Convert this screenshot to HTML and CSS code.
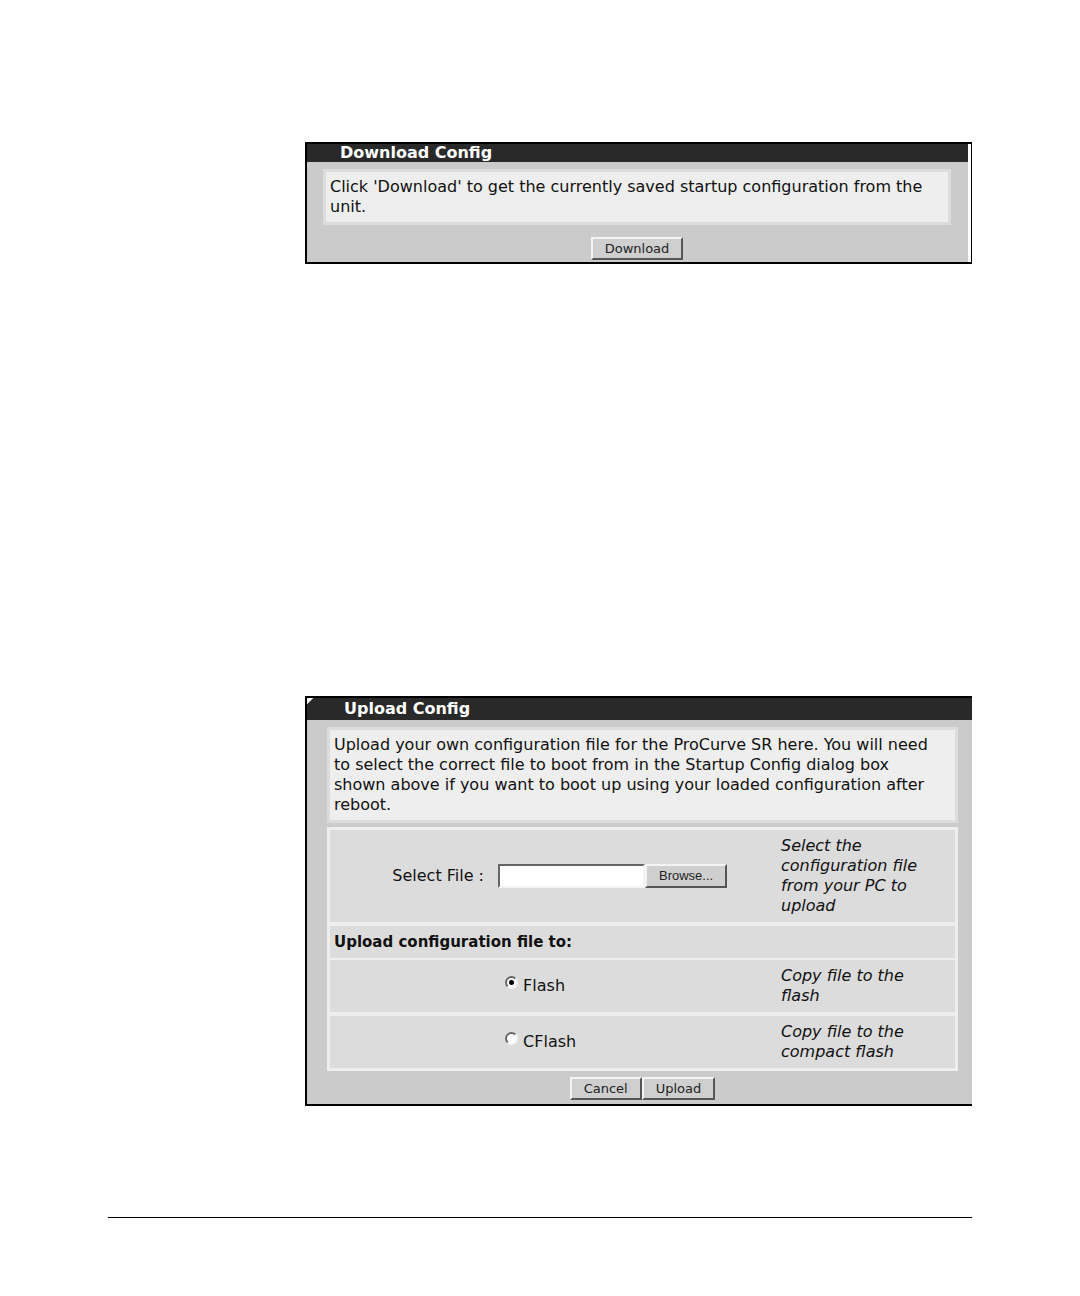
FILE: index.html
```
<!DOCTYPE html>
<html lang="en">
<head>
    <meta charset="UTF-8">
    <meta name="viewport" content="width=device-width, initial-scale=1.0">
    <title>Configuration Transfer</title>
    <link rel="stylesheet" href="styles.css">
</head>
<body>
    <div class="page">
        <main class="content">
            <section class="panel panel-download">
                <h2 class="panel-title">Download Config</h2>
                <form class="panel-body">
                    <p class="note">Click 'Download' to get the currently saved startup configuration from the unit.</p>
                    <div class="actions">
                        <button type="button" class="btn">Download</button>
                    </div>
                </form>
            </section>

            <section class="panel panel-upload">
                <h2 class="panel-title">Upload Config</h2>
                <form class="panel-body">
                    <p class="note">Upload your own configuration file for the ProCurve SR here. You will need to select the correct file to boot from in the Startup Config dialog box shown above if you want to boot up using your loaded configuration after reboot.</p>

                    <div class="fields">
                        <div class="row">
                            <label class="row-label" for="config-file">Select File :</label>
                            <div class="file-picker">
                                <input type="text" id="config-file" class="file-input">
                                <button type="button" class="btn btn-browse">Browse...</button>
                            </div>
                            <p class="help">Select the configuration file from your PC to upload</p>
                        </div>
                        <h3 class="row-heading">Upload configuration file to:</h3>
                        <div class="row">
                            <div class="choice">
                                <input type="radio" id="flash" name="target" checked>
                                <label for="flash">Flash</label>
                            </div>
                            <p class="help">Copy file to the flash</p>
                        </div>
                        <div class="row">
                            <div class="choice">
                                <input type="radio" id="cflash" name="target">
                                <label for="cflash">CFlash</label>
                            </div>
                            <p class="help">Copy file to the compact flash</p>
                        </div>
                    </div>

                    <div class="actions">
                        <button type="button" class="btn">Cancel</button>
                        <button type="submit" class="btn">Upload</button>
                    </div>
                </form>
            </section>
        </main>
        <hr class="page-rule">
    </div>
</body>
</html>
```
FILE: styles.css
```
* {
    margin: 0;
    padding: 0;
    box-sizing: border-box;
}

body {
    background: #fff;
    color: #111;
    font-family: "DejaVu Sans", Verdana, sans-serif;
    font-size: 16px;
    line-height: 20px;
}

.page {
    padding: 142px 10% 78px;
}

.page-rule {
    margin-top: 111px;
    border: 0;
    border-top: 1px solid #000;
}

.content {
    margin-left: 197px;
}

/* Panels */
.panel {
    border: 2px solid #000;
    background: #cbcbcb;
}

.panel-download {
    margin-bottom: 432px;
    border-right-width: 1px;
    background: #fff;
    padding-right: 3px;
}

.panel-upload {
    border-right: 0;
}

.panel-title {
    background: #292929;
    color: #fff;
    font-size: 16px;
    line-height: 22px;
    padding-left: 37px;
}

.panel-download .panel-title {
    line-height: 18px;
    padding-left: 33px;
}

/* Clipped top left corner of the title bar */
.panel-upload .panel-title {
    background: linear-gradient(135deg, #fff 4px, #292929 5px);
}

.panel-body {
    background: #cbcbcb;
    padding: 7px 14px 4px 20px;
}

.panel-download .panel-body {
    padding: 7px 17px 2px 16px;
}

.note {
    background: #eee;
    border: 3px solid #dcdcdc;
    padding: 5px 16px 5px 4px;
}

/* Field rows */
.fields {
    margin-top: 4px;
    border: 3px solid #eee;
    background: #dcdcdc;
}

.row {
    display: flex;
    align-items: center;
    padding: 6px 4px;
}

.row + .row {
    border-top: 4px solid #eee;
}

.row-label {
    width: 150px;
    text-align: right;
}

.row-heading {
    border-top: 4px solid #eee;
    border-bottom: 2px solid #eee;
    font-size: 15px;
    line-height: 32px;
    padding-left: 4px;
}

.help {
    width: 170px;
    padding-right: 16px;
    font-style: italic;
}

.file-picker {
    display: flex;
    flex: 1;
    margin-left: 14px;
}

.file-input {
    width: 147px;
    height: 24px;
    border: 2px solid;
    border-color: #666 #f4f4f4 #f4f4f4 #666;
    background: #fff;
    padding: 0 3px;
}

.choice {
    flex: 1;
    padding-left: 171px;
}

.choice input {
    appearance: none;
    width: 13px;
    height: 13px;
    margin-bottom: 2px;
    border: 2px solid;
    border-color: #666 #f4f4f4 #f4f4f4 #666;
    border-radius: 50%;
    background: #fff;
}

.choice input:checked {
    background: radial-gradient(circle, #000 2px, #fff 3px);
}

/* Buttons */
.actions {
    display: flex;
    justify-content: center;
    margin-top: 6px;
}

.panel-download .actions {
    margin-top: 12px;
}

.btn {
    height: 23px;
    padding: 0 12px;
    border: 2px solid;
    border-color: #f4f4f4 #555 #555 #f4f4f4;
    background: #cfcfcf;
    color: #222;
    font-family: inherit;
    font-size: 13px;
    line-height: 18px;
}

.btn-browse {
    height: 24px;
    font-family: "Liberation Sans", Arial, sans-serif;
    font-size: 13px;
}
```
